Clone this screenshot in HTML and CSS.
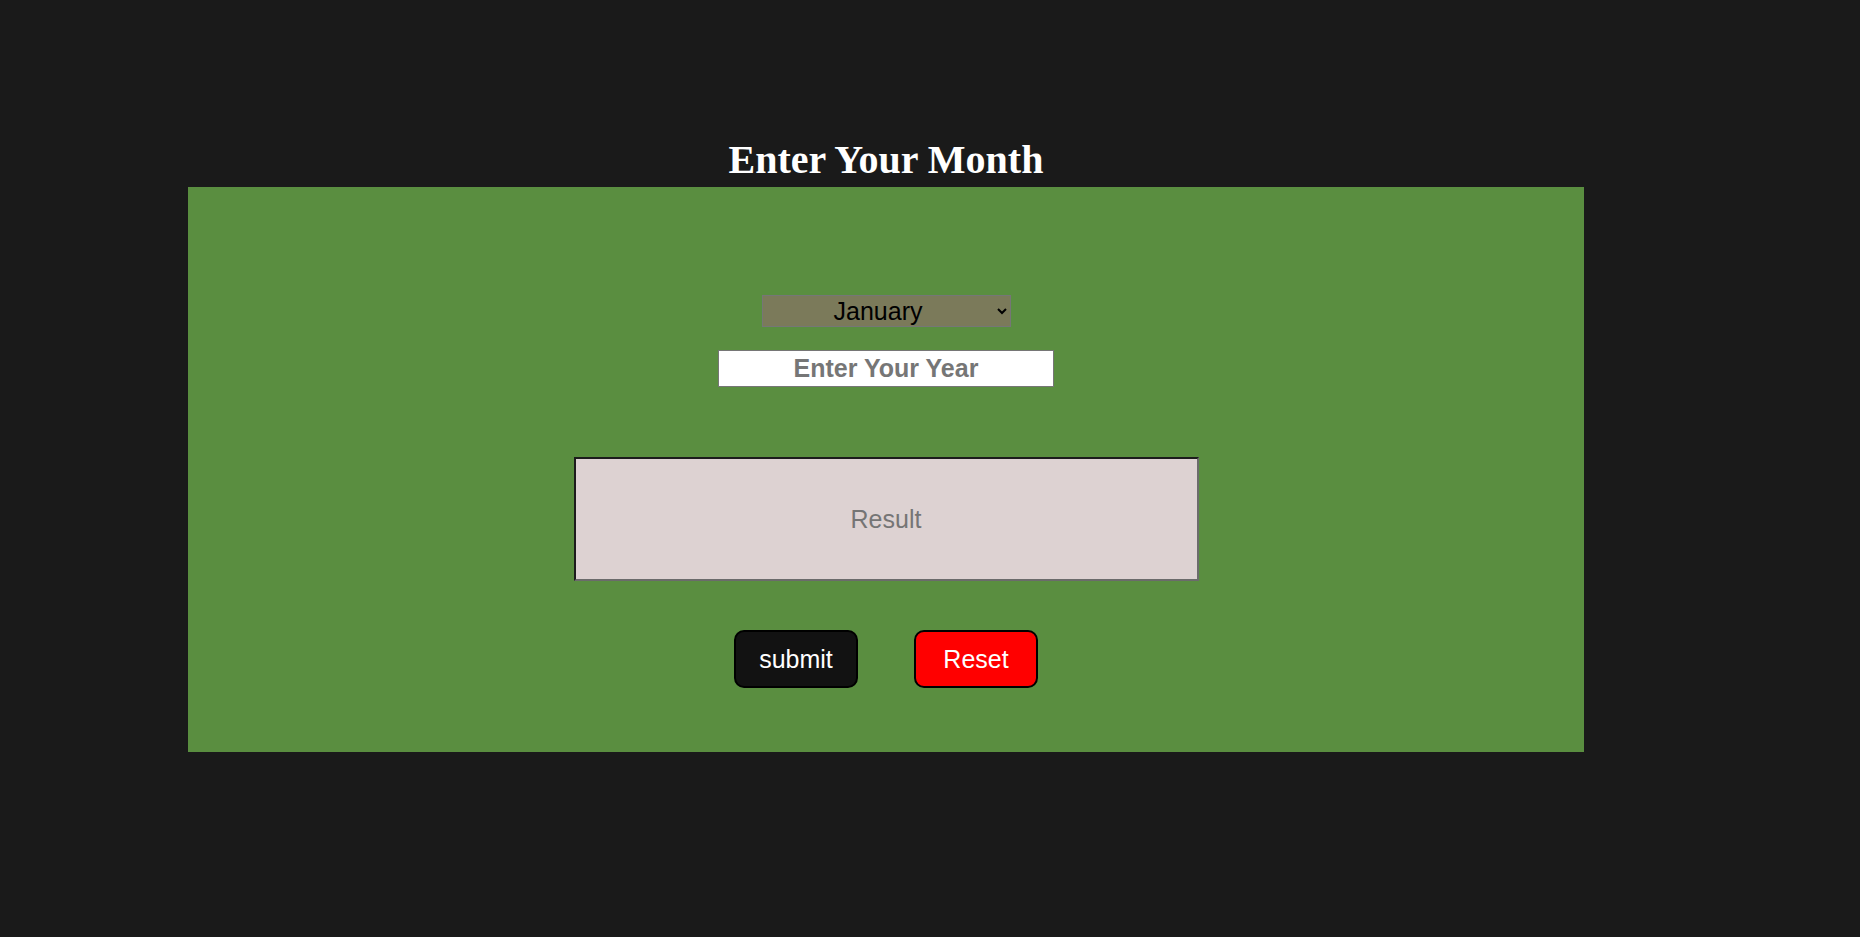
FILE: index.html
```html
<!DOCTYPE html>
<html lang="en">
<head>
<meta charset="utf-8">
<title>Enter Your Month</title>
<link rel="stylesheet" href="styles.css">
</head>
<body>
<div class="page">
  <h1 class="title">Enter Your Month</h1>
  <div class="panel">
    <select class="month">
      <option>January</option>
      <option>February</option>
      <option>March</option>
      <option>April</option>
      <option>May</option>
      <option>June</option>
      <option>July</option>
      <option>August</option>
      <option>September</option>
      <option>October</option>
      <option>November</option>
      <option>December</option>
    </select>
    <input class="year" type="text" placeholder="Enter Your Year">
    <input class="result" type="text" placeholder="Result" readonly>
    <div class="actions">
      <button class="btn btn-submit" type="button">submit</button>
      <button class="btn btn-reset" type="button">Reset</button>
    </div>
  </div>
</div>
</body>
</html>
```

FILE: styles.css
```css
html, body {
  margin: 0;
  padding: 0;
  background: #1a1a1a;
  height: 100%;
}

.page {
  padding-top: 133px;
  margin-left: 188px;
  width: 1396px;
}

.title {
  margin: 0;
  text-align: center;
  color: #ffffff;
  font-family: "Liberation Serif", "Times New Roman", serif;
  font-weight: bold;
  font-size: 40px;
  line-height: 54px;
}

.panel {
  background: #5a8e40;
  height: 565px;
  box-sizing: border-box;
  padding-top: 108px;
  display: flex;
  flex-direction: column;
  align-items: center;
}

.month {
  width: 249px;
  height: 32px;
  box-sizing: border-box;
  background: #7b7a5a;
  color: #000;
  border: 1px solid #767676;
  border-radius: 0;
  font-family: "Liberation Sans", Arial, sans-serif;
  font-size: 25px;
  text-align: center;
  text-align-last: center;
  padding: 0 4px 0 0;
}

.year {
  margin-top: 23px;
  width: 336px;
  height: 37px;
  box-sizing: border-box;
  background: #ffffff;
  border: 1px solid #767676;
  font-family: "Liberation Sans", Arial, sans-serif;
  font-size: 25px;
  font-weight: bold;
  text-align: center;
  padding: 0;
  outline: none;
}

.year::placeholder {
  color: #767676;
  font-weight: bold;
}

.result {
  margin-top: 70px;
  width: 625px;
  height: 124px;
  box-sizing: border-box;
  background: #ddd2d2;
  border-width: 2px;
  border-style: solid;
  border-color: #1c1c1c #6b6b6b #6b6b6b #1c1c1c;
  font-family: "Liberation Sans", Arial, sans-serif;
  font-size: 25px;
  text-align: center;
  padding: 0;
  outline: none;
}

.result::placeholder {
  color: #757575;
}

.actions {
  margin-top: 49px;
  display: flex;
  gap: 56px;
}

.btn {
  width: 124px;
  height: 58px;
  box-sizing: border-box;
  border: 2px solid #000;
  border-radius: 10px;
  color: #ffffff;
  font-family: "Liberation Sans", Arial, sans-serif;
  font-size: 25px;
  padding: 0;
}

.btn-submit {
  background: #121212;
}

.btn-reset {
  background: #ff0000;
}
```
